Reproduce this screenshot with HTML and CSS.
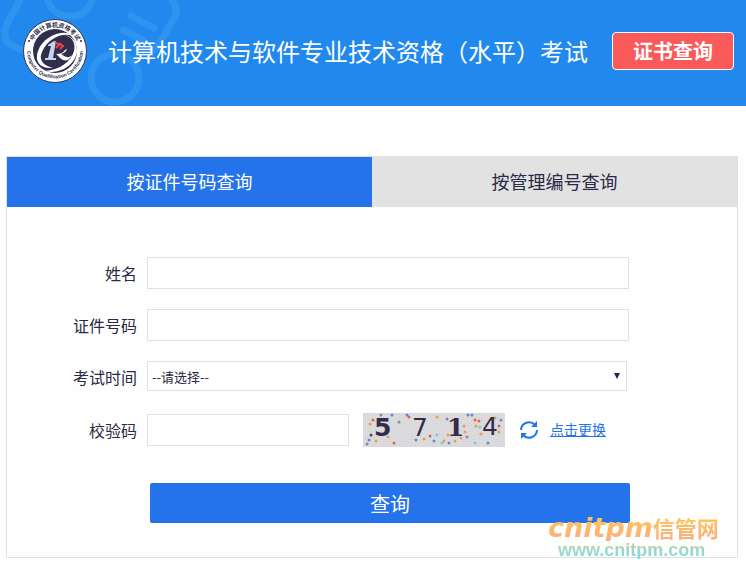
FILE: index.html
```html
<!DOCTYPE html>
<html lang="zh-CN">
<head>
<meta charset="utf-8">
<meta name="viewport" content="width=device-width, initial-scale=1">
<title>计算机技术与软件专业技术资格（水平）考试</title>
<link rel="stylesheet" href="styles.css">
</head>
<body>
<header class="header">
  <svg class="header-art" width="200" height="106" viewBox="0 0 200 106" aria-hidden="true">
    <g fill="none" stroke="#2f94ef" stroke-width="7" stroke-linejoin="round">
      <path d="M21 -4 Q17 7 9 20 Q2 32 7 42 Q12 47 26 51"/>
      <path d="M47 -4 C49 22 89 24 93 -4"/>
      <circle cx="115" cy="78" r="24"/>
      <path d="M131 16 L154 28 M123 30 L143 40" stroke-linecap="round"/>
      <path d="M171 -2 Q180 10 173 20 L158 46 Q152 54 142 52"/>
    </g>
  </svg>
  <svg class="logo" width="64" height="64" viewBox="0 0 64 64" role="img" aria-label="Computer Qualification Certification">
    <defs>
      <path id="arc-top" d="M8 32 A24 24 0 0 1 56 32"/>
      <path id="arc-bottom" d="M5 24 A28 28 0 1 0 59 24"/>
    </defs>
    <circle cx="32" cy="32" r="31.5" fill="#fff" stroke="#37345a"/>
    <circle cx="32" cy="32" r="22" fill="#302e4c"/>
    <text class="logo-cn" text-anchor="middle"><textPath href="#arc-top" startOffset="50%">中国计算机资格考试</textPath></text>
    <text class="logo-en" text-anchor="middle"><textPath href="#arc-bottom" startOffset="50%">Computer Qualification Certification</textPath></text>
    <circle cx="6" cy="22" r="1" fill="#302e4c"/>
    <circle cx="58" cy="22" r="1" fill="#302e4c"/>
    <path d="M50 17 C42 9 20 17 15 32 C11 43 18 50 30 49 C21 47 15 41 19 33 C25 19 40 13 50 17Z" fill="#fff"/>
    <path d="M42 16 C49 18 53 24 51 32 C48 43 36 51 22 52 C36 56 53 46 54 32 C54 23 49 17 42 16Z" fill="#fff"/>
    <path d="M25 26 L31 22 H33 L30 39 H33 V41 H22 V39 H25 L28 27 H25Z" fill="#c9d2ec"/>
    <path d="M42 31 C40 34 37 35 33 35 C37 38 39 43 45 41 L50 36 L46 38 C43 39 40 36 38 35 C41 34 43 33 44 30Z" fill="#fff"/>
    <path d="M32 23 L36 26 L33 29 M36 24 L40 27 L37 30" fill="none" stroke="#e7454e" stroke-width="2"/>
  </svg>
  <h1 class="title">计算机技术与软件专业技术资格（水平）考试</h1>
  <button class="cert-button" type="button">证书查询</button>
</header>

<main class="panel">
  <div class="tabs" role="tablist">
    <button class="tab tab-active" type="button" role="tab" aria-selected="true">按证件号码查询</button>
    <button class="tab" type="button" role="tab" aria-selected="false">按管理编号查询</button>
  </div>
  <form class="form">
    <div class="row">
      <label class="label" for="name">姓名</label>
      <input class="field" id="name" type="text">
    </div>
    <div class="row">
      <label class="label" for="idno">证件号码</label>
      <input class="field" id="idno" type="text">
    </div>
    <div class="row">
      <label class="label" for="exam">考试时间</label>
      <div class="select-box">
        <select class="select" id="exam"><option>--请选择--</option></select>
        <svg class="select-arrow" width="6" height="6" viewBox="0 0 6 6" aria-hidden="true"><path d="M0 0H6L3 6Z" fill="#26244a"/></svg>
      </div>
    </div>
    <div class="row">
      <label class="label" for="code">校验码</label>
      <div class="captcha">
        <input class="field code-field" id="code" type="text">
        <svg class="captcha-image" width="142" height="34" viewBox="0 0 142 34" role="img" aria-label="5714">
          <defs>
            <pattern id="grain" width="4" height="4" patternUnits="userSpaceOnUse">
              <path d="M0 0h1v1H0zM2 2h1v1H2z" fill="#cfcfd3"/>
            </pattern>
          </defs>
          <rect width="142" height="34" fill="#dcdcde"/>
          <rect width="142" height="34" fill="url(#grain)"/>
          <g fill="none" stroke-width="3" stroke-linecap="round">
            <path stroke="#e6a04c" d="M7 11h0M13 28h0M25 24h0M61 26h0M74 4h0M81 28h0M85 22h0M92 28h0M101 13h0M102 19h0M98 25h0M113 13h0M118 21h0M132 5h0M136 19h0"/>
            <path stroke="#df6349" d="M10 7h0M31 30h0M67 23h0M46 4h0M112 7h0M116 8h0M136 13h0"/>
            <path stroke="#5b8fd2" d="M29 2h0M44 2h0M6 27h0M53 27h0M71 28h0M105 2h0M109 2h0M125 30h0M86 30h0"/>
            <path stroke="#70cee9" d="M74 22h0M79 30h0M112 30h0M117 14h0"/>
            <path stroke="#8983bb" d="M4 31h0M18 2h0M36 9h0M84 6h0M104 24h0M138 7h0"/>
            <path stroke="#51496a" d="M8 22h0"/>
          </g>
          <g fill="#322c48">
            <text class="digit" x="11" y="23">5</text>
            <text class="digit digit-light" x="49" y="23">7</text>
            <text class="digit digit-serif" x="84" y="23">1</text>
            <text class="digit digit-light" x="119" y="22">4</text>
          </g>
        </svg>
        <svg class="refresh" width="20" height="20" viewBox="0 0 20 20" aria-hidden="true">
          <g fill="none" stroke="#2473ea" stroke-width="2">
            <path d="M2 10 A8 8 0 0 1 16 5"/>
            <path d="M18 10 A8 8 0 0 1 4 15"/>
          </g>
          <path d="M18 1V7H12ZM2 19V13H8Z" fill="#2473ea"/>
        </svg>
        <a class="change" href="#">点击更换</a>
      </div>
    </div>
    <button class="submit" type="submit">查询</button>
  </form>
  <div class="watermark">
    <div class="mark-name"><span class="mark-latin">cnitpm</span><span class="mark-cn">信管网</span></div>
    <div class="mark-url">www.cnitpm.com</div>
  </div>
</main>
</body>
</html>
```
FILE: styles.css
```css
* {
  box-sizing: border-box;
}

body {
  margin: 0;
  background: #fefefe;
  color: #2b2945;
  font-family: "Noto Sans CJK SC", sans-serif;
  font-size: 16px;
}

button,
input,
select {
  margin: 0;
  font-family: inherit;
  color: inherit;
}

.header {
  position: relative;
  display: flex;
  align-items: center;
  height: 106px;
  padding: 0 12px 4px 23px;
  background: #2189ee;
  overflow: hidden;
}

.header-art {
  position: absolute;
  left: 0;
  top: 0;
}

.logo {
  position: relative;
  flex: none;
}

.logo-cn {
  font-size: 6px;
  font-weight: 700;
  fill: #302e4c;
}

.logo-en {
  font-family: "Liberation Sans", sans-serif;
  font-size: 5px;
  font-weight: 700;
  fill: #302e4c;
}

.title {
  position: relative;
  margin: 0 auto 0 21px;
  color: #fff;
  font-size: 24px;
  font-weight: 400;
  line-height: 36px;
  white-space: nowrap;
}

.cert-button {
  flex: none;
  width: 122px;
  height: 38px;
  padding: 0;
  border: 1px solid #fff;
  border-radius: 4px;
  background: #fa5a5a;
  color: #fff;
  font-size: 20px;
  font-weight: 700;
  line-height: 32px;
}

.panel {
  position: relative;
  margin: 50px 8px 14px 6px;
  border: 1px solid #e1e1e1;
}

.tabs {
  display: grid;
  grid-template-columns: 1fr 1fr;
}

.tab {
  height: 50px;
  padding: 0 0 2px;
  border: 0;
  background: #e2e2e2;
  font-size: 18px;
}

.tab-active {
  background: #2473ea;
  color: #fff;
}

.form {
  display: grid;
  gap: 20px;
  padding: 50px 108px 34px 0;
}

.row {
  display: grid;
  grid-template-columns: 130px 1fr;
  column-gap: 10px;
  align-items: center;
  height: 32px;
}

.label {
  text-align: right;
}

.field {
  width: 100%;
  height: 32px;
  padding: 0 8px;
  border: 1px solid #e1e1e1;
  background: #fff;
  font-size: 14px;
}

.select-box {
  position: relative;
  height: 32px;
  padding-right: 2px;
}

.select {
  display: block;
  width: 100%;
  height: 30px;
  padding: 0 4px;
  appearance: none;
  border: 1px solid #e1e1e1;
  border-radius: 0;
  background: #fff;
  font-size: 13px;
}

.select-arrow {
  position: absolute;
  right: 9px;
  top: 12px;
  pointer-events: none;
}

.captcha {
  display: flex;
  align-items: center;
}

.code-field {
  width: 202px;
}

.captcha-image {
  margin-left: 14px;
}

.digit {
  font-family: "DejaVu Sans", sans-serif;
  font-size: 25px;
  font-weight: 700;
}

.digit-light {
  font-weight: 400;
}

.digit-serif {
  font-family: "DejaVu Serif", serif;
  font-weight: 700;
}

.refresh {
  margin-left: 14px;
}

.change {
  margin-left: 11px;
  padding-bottom: 2px;
  color: #2473ea;
  font-size: 14px;
  white-space: nowrap;
}

.submit {
  height: 40px;
  margin: 18px -1px 0 143px;
  padding: 0;
  border: 0;
  border-radius: 2px;
  background: #2473ea;
  color: #fff;
  font-size: 20px;
}

.watermark {
  position: absolute;
  right: 17px;
  bottom: -2px;
  width: 172px;
  pointer-events: none;
}

.mark-name {
  display: flex;
  align-items: center;
  height: 28px;
  background: linear-gradient(#fdc45c 20%, #fbb07c 90%);
  background-clip: text;
  color: transparent;
  white-space: nowrap;
}

.mark-latin {
  font-family: "DejaVu Sans", sans-serif;
  font-size: 27px;
  font-style: italic;
  font-weight: 700;
}

.mark-cn {
  font-size: 22px;
  font-weight: 700;
}

.mark-url {
  padding-left: 10px;
  background: linear-gradient(#bccfa6 20%, #7adfe8 90%);
  background-clip: text;
  color: transparent;
  font-family: "Liberation Sans", sans-serif;
  font-size: 18px;
  font-weight: 700;
  line-height: 18px;
}
```
